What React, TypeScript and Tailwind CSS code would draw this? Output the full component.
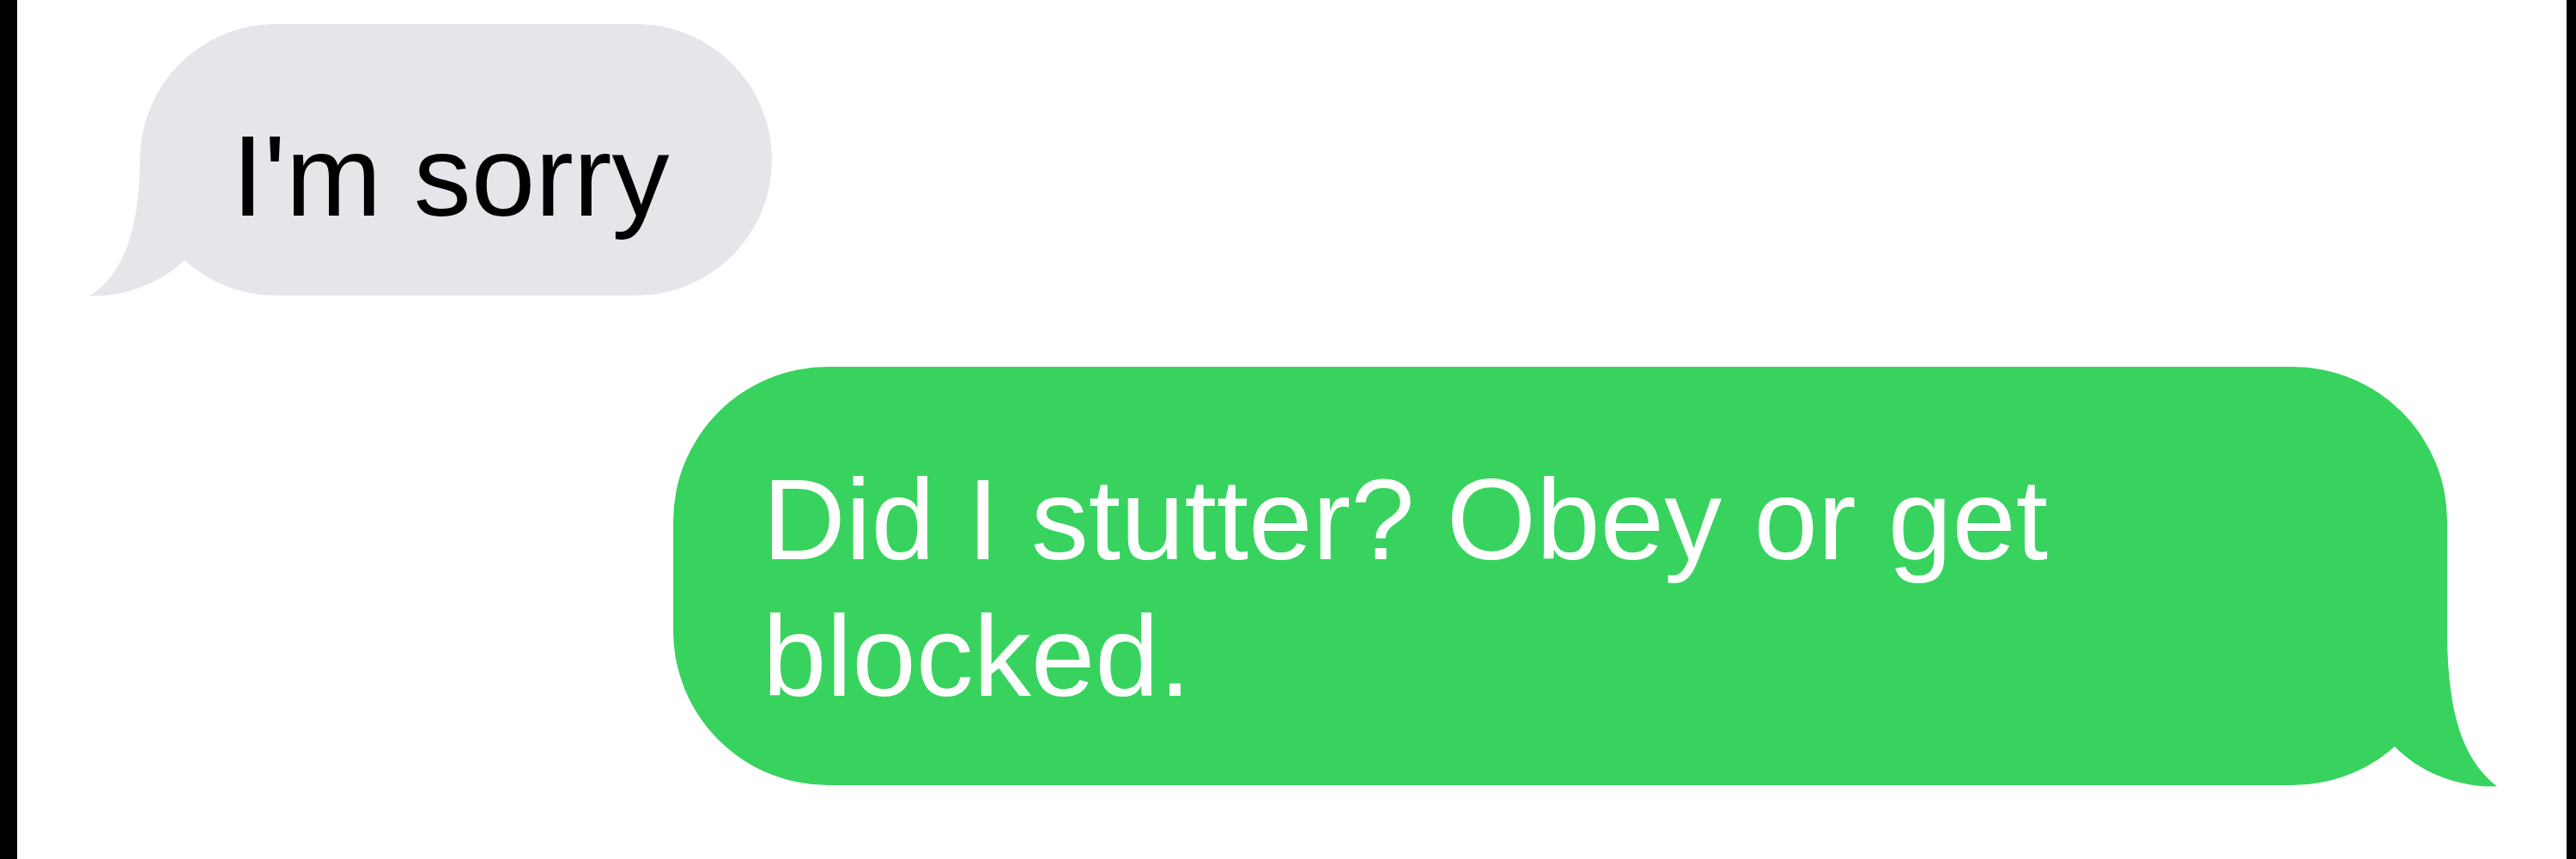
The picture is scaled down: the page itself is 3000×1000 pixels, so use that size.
import React from "react";

export default function App() {
  return (
    <div className="flex w-[3000px] h-[1000px] bg-white" style={{ fontFamily: '"Liberation Sans", Arial, Helvetica, sans-serif' }}>
      <div className="w-[20px] h-full bg-black shrink-0" />
      <div className="flex-1 flex flex-col items-start">
        {/* Received bubble */}
        <div className="relative ml-[143px] mt-[28px] w-[736px] h-[316px] rounded-[158px] bg-[#e5e5ea] pl-[107px] pt-[99px]">
          <svg
            className="absolute -left-[63px] top-[152px] w-[230px] h-[166px]"
            viewBox="100 180 230 166"
          >
            <path
              d="M163 184 C163 272 140 324 104 344.5 C140 346 185 332 216 302 L225 240 L190 184 Z"
              fill="#e5e5ea"
            />
          </svg>
          <p className="relative text-[134px] leading-[155px] text-black whitespace-nowrap">I'm sorry</p>
        </div>

        {/* Sent bubble */}
        <div className="relative self-end mr-[139px] mt-[83px] w-[2066px] h-[487px] rounded-[180px] bg-[#37d35e] pl-[104px] pt-[98px]">
          <svg
            className="absolute left-[1976px] top-[293px] w-[160px] h-[200px]"
            viewBox="2760 720 160 200"
          >
            <path
              d="M2850 734 C2850 830 2868 884 2908 915.5 C2868 917 2820 902 2789 869 L2780 800 L2800 734 Z"
              fill="#37d35e"
            />
          </svg>
          <p className="relative text-[134px] leading-[159px] text-white">
            Did I stutter? Obey or get
            <br />
            blocked.
          </p>
        </div>
      </div>
      <div className="w-[11px] h-full bg-black shrink-0" />
    </div>
  );
}
